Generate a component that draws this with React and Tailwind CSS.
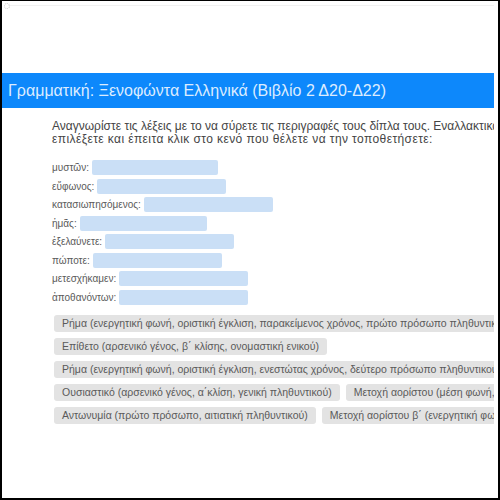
import React from "react";

const words = [
  ["μυστῶν:", "w-[126px]"],
  ["εὔφωνος:", "w-[129px]"],
  ["κατασιωπησόμενος:", "w-[129px]"],
  ["ἡμᾶς:", "w-[127px]"],
  ["ἐξελαύνετε:", "w-[129px]"],
  ["πώποτε:", "w-[129px]"],
  ["μετεσχήκαμεν:", "w-[129px]"],
  ["ἀποθανόντων:", "w-[129px]"],
];

const chipRows = [
  ["Ρήμα (ενεργητική φωνή, οριστική έγκλιση, παρακείμενος χρόνος, πρώτο πρόσωπο πληθυντικού αριθμού)"],
  ["Επίθετο (αρσενικό γένος, β΄ κλίσης, ονομαστική ενικού)"],
  ["Ρήμα (ενεργητική φωνή, οριστική έγκλιση, ενεστώτας χρόνος, δεύτερο πρόσωπο πληθυντικού αριθμού)"],
  ["Ουσιαστικό (αρσενικό γένος, α΄κλίση, γενική πληθυντικού)", "Μετοχή αορίστου (μέση φωνή, γενική πληθυντικού)"],
  ["Αντωνυμία (πρώτο πρόσωπο, αιτιατική πληθυντικού)", "Μετοχή αορίστου β΄ (ενεργητική φωνή, γενική πληθυντικού)"],
];

function Chip({ children }) {
  return (
    <div className="shrink-0 whitespace-nowrap rounded-[3px] bg-[#e3e3e3] px-[8px] h-[17px] leading-[17px] text-[10.5px] text-[#5a5a5a]">
      {children}
    </div>
  );
}

export default function App() {
  return (
    <div
      className="w-[500px] h-[500px] bg-white border-l-2 border-b-2 border-t border-r-2 border-black overflow-hidden"
      style={{ fontFamily: '"Liberation Sans", Arial, sans-serif' }}
    >
      <div className="relative h-full w-[492px] overflow-hidden">
        {/* small frame marker in the corner */}
        <div className="absolute left-[2px] top-[2px] w-[6px] h-[6px] rounded-full border border-dotted border-[#cfcfcf]" />
        <div className="h-[4px]" />
        <div className="h-px bg-[#f1f1f1] ml-[6px]" />
        <div className="h-[67px]" />

        <div className="h-[35px] bg-[#0d88fb] flex items-center pl-[6px]">
          <span className="text-[16px] text-[#dcecff] whitespace-nowrap">
            Γραμματική: Ξενοφώντα Ελληνικά (Βιβλίο 2 Δ20-Δ22)
          </span>
        </div>

        <div className="pl-[50px] pt-[12px] w-[640px]">
          <p className="text-[12px] leading-[13px] text-[#454545] w-[482px]">
            <span className="block whitespace-nowrap">
              Αναγνωρίστε τις λέξεις με το να σύρετε τις περιγραφές τους δίπλα τους. Εναλλακτικά
            </span>
            <span className="block whitespace-nowrap tracking-[0.4px]">
              επιλέξετε και έπειτα κλικ στο κενό που θέλετε να την τοποθετήσετε:
            </span>
          </p>

          <div className="mt-[14px] flex flex-col gap-[3.5px]">
            {words.map(([w, cls]) => (
              <div key={w} className="flex items-center h-[15px]">
                <span className="text-[10px] text-[#5a5a5a] whitespace-nowrap">{w}</span>
                <div className={`${cls} ml-[3px] h-[15px] rounded-[2px] bg-[#cadff6]`} />
              </div>
            ))}
          </div>

          <div className="mt-[10px] flex flex-col gap-[6px] pl-[2px]">
            {chipRows.map((row, i) => (
              <div key={i} className="flex gap-[6px]">
                {row.map((c) => (
                  <Chip key={c}>{c}</Chip>
                ))}
              </div>
            ))}
          </div>
        </div>
      </div>
    </div>
  );
}
